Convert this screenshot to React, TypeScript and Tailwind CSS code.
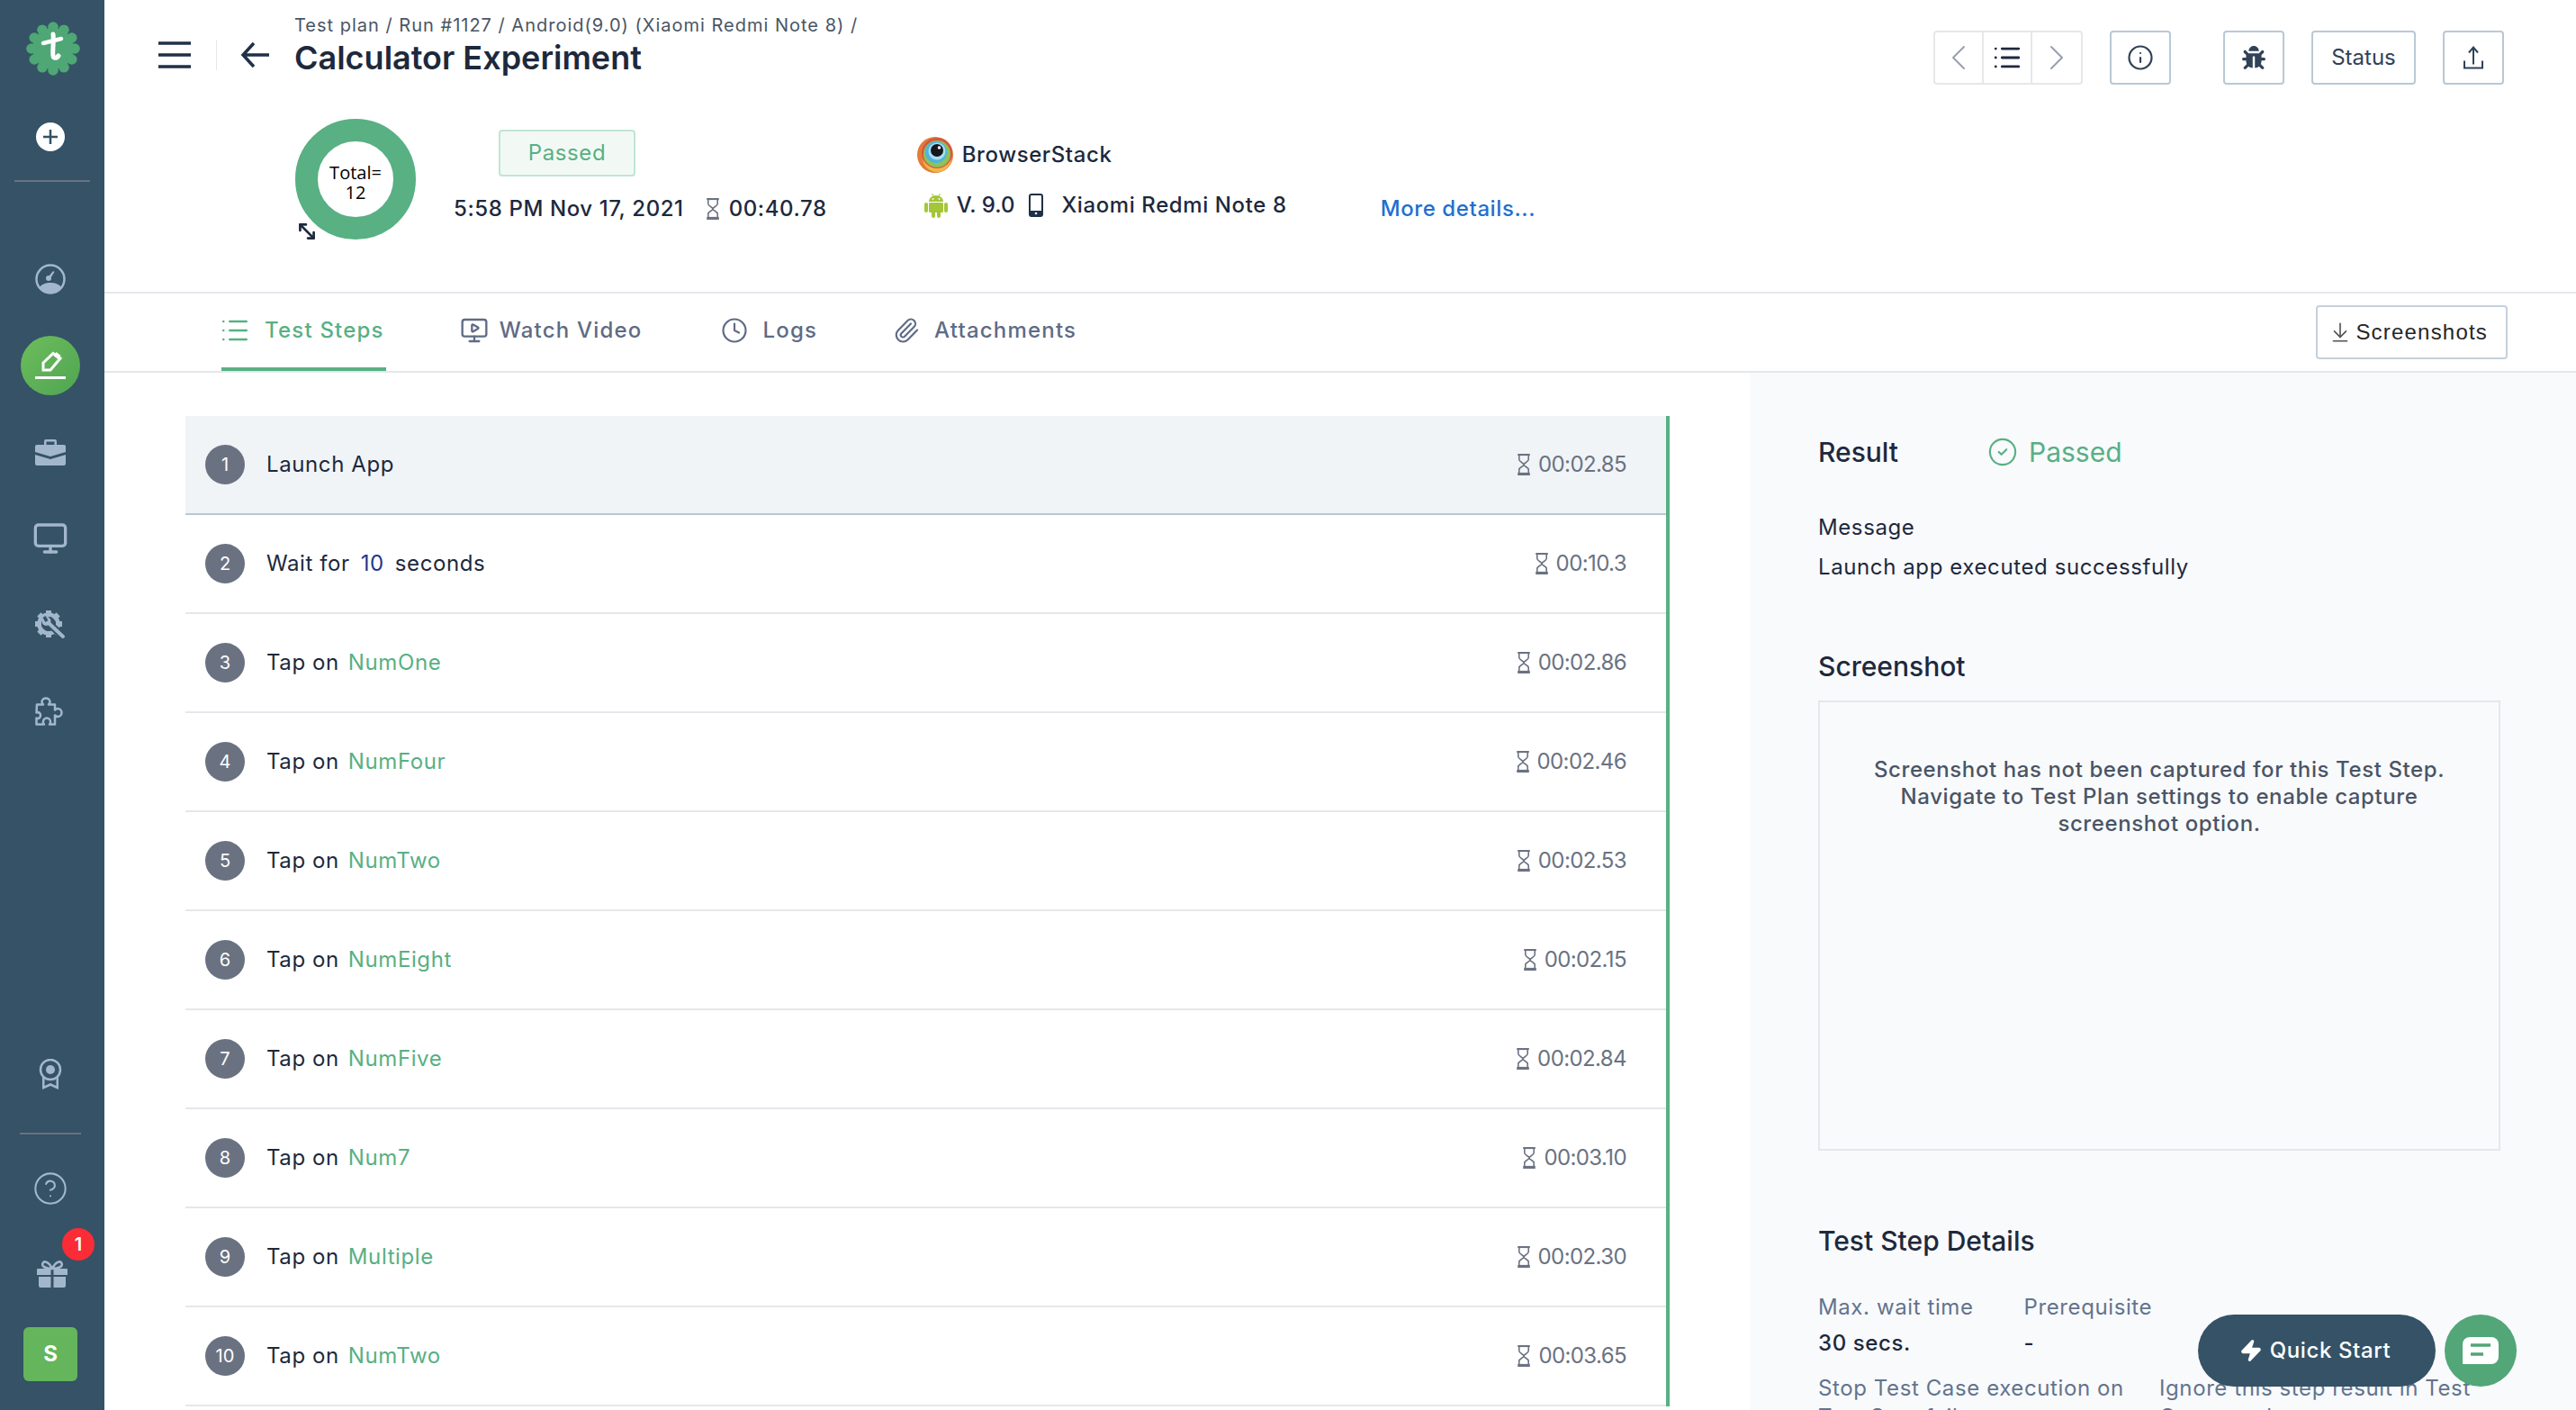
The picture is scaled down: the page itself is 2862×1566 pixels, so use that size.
import {
  ArrowDownToLine,
  ChevronLeft,
  ChevronRight,
  CircleCheck,
  CircleHelp,
  Clock,
  Info,
  List,
  Monitor,
  MonitorPlay,
  MoveDiagonal2,
  Paperclip,
  Zap,
} from "lucide-react";
import { FaBug } from "react-icons/fa";

const steps = [
  { n: 1, verb: "Launch App", time: "00:02.85" },
  { n: 2, verb: "Wait for", value: "10", after: "seconds", time: "00:10.3" },
  { n: 3, verb: "Tap on", target: "NumOne", time: "00:02.86" },
  { n: 4, verb: "Tap on", target: "NumFour", time: "00:02.46" },
  { n: 5, verb: "Tap on", target: "NumTwo", time: "00:02.53" },
  { n: 6, verb: "Tap on", target: "NumEight", time: "00:02.15" },
  { n: 7, verb: "Tap on", target: "NumFive", time: "00:02.84" },
  { n: 8, verb: "Tap on", target: "Num7", time: "00:03.10" },
  { n: 9, verb: "Tap on", target: "Multiple", time: "00:02.30" },
  { n: 10, verb: "Tap on", target: "NumTwo", time: "00:03.65" },
];

function Logo() {
  const lobes = Array.from({ length: 12 }, (_, i) => (i * Math.PI) / 6);
  return (
    <svg viewBox="0 0 60 60" className="ml-1.5 size-15">
      <circle cx="30" cy="30" r="23" fill="#4ea774" />
      {lobes.map((a) => (
        <circle key={a} cx={30 + 24 * Math.cos(a)} cy={30 + 24 * Math.sin(a)} r="5.8" fill="#4ea774" />
      ))}
      <path d="M30 14c1 8-1 20 0 24 .5 3 4 3 6 0" fill="none" stroke="#fff" strokeWidth="5" strokeLinecap="round" />
      <path d="M19 24l20-5" fill="none" stroke="#fff" strokeWidth="4.5" strokeLinecap="round" />
    </svg>
  );
}

function Gauge() {
  return (
    <svg viewBox="0 0 34 34" className="size-8.5" fill="#a3b7cc">
      <circle cx="17" cy="17" r="15.5" fill="none" stroke="#a3b7cc" strokeWidth="2.5" />
      <path d="M4.5 26c4-4 8-5 12.500-5s8.500 1 12.500 5c-3 4-7.500 6.500-12.500 6.500S7.500 30 4.500 26z" />
      <circle cx="15" cy="16" r="3" />
      <path d="M15 14l5-6 1.500 1-4 6.500z" />
    </svg>
  );
}

function PencilLine() {
  return (
    <svg viewBox="0 0 34 32" className="w-8.5 h-8" fill="none" stroke="#fff">
      <path d="M9 13L20 2.500l8 5.500L17 21H9z" strokeWidth="3" />
      <path d="M22 3l5 4" strokeWidth="5" />
      <path d="M0 29.500h34" strokeWidth="3" />
    </svg>
  );
}

function Briefcase() {
  return (
    <svg viewBox="0 0 34 30" className="w-8.5 h-7.5" fill="#a3b7cc">
      <path d="M10 7V3a2 2 0 012-2h10a2 2 0 012 2v4h-2.500V3.500h-9V7z" />
      <path d="M0 9a2 2 0 012-2h30a2 2 0 012 2v6l-17 5-17-5z" />
      <path d="M0 18l17 5 17-5v10a2 2 0 01-2 2H2a2 2 0 01-2-2z" />
    </svg>
  );
}

function GearWrench() {
  const teeth = Array.from({ length: 8 }, (_, i) => i * 45);
  return (
    <svg viewBox="0 0 34 32" className="w-8.5 h-8">
      <g transform="translate(15 15)">
        {teeth.map((a) => (
          <rect key={a} x="-3" y="-15" width="6" height="7" fill="#a3b7cc" transform={`rotate(${a})`} />
        ))}
        <circle r="10.500" fill="none" stroke="#a3b7cc" strokeWidth="4.500" />
      </g>
      <path d="M12 11l19 18" stroke="#355266" strokeWidth="8" />
      <path d="M14 13l17 16" stroke="#a3b7cc" strokeWidth="4" strokeLinecap="round" />
      <circle cx="12.500" cy="12" r="5" fill="#a3b7cc" />
      <path d="M10 7l3 5" stroke="#355266" strokeWidth="3.500" />
    </svg>
  );
}

function PuzzlePiece() {
  return (
    <svg viewBox="0 0 33 32" className="h-8 w-8.5" fill="none" stroke="#a3b7cc" strokeWidth="2.500" strokeLinejoin="round">
      <path d="M1.500 8.500h7c-1-1-1.500-2-1.500-3a4.500 4 0 019 0c0 1-.5 2-1.500 3h7v6c1-1 2-1.500 3-1.500a4.500 4.500 0 010 9c-1 0-2-.5-3-1.500v10h-6c1-1 1.500-2 1-3a4 4 0 00-8 0c-.5 1 0 2 1 3h-8.500v-7c1 .5 2.500.5 3.500-.5a3.500 3.500 0 000-5c-1-1-2.500-1-3.500-.5z" />
    </svg>
  );
}

function Ribbon() {
  return (
    <svg viewBox="0 0 26 34" className="w-6.5 h-8.5" fill="#a3b7cc">
      <path d="M4 20v14l9-4 9 4V20h-2.500v10L13 27l-6.500 3V20z" />
      <circle cx="13" cy="12" r="11" fill="#355266" stroke="#a3b7cc" strokeWidth="2.500" />
      <circle cx="13" cy="12" r="5" />
    </svg>
  );
}

function Gift() {
  return (
    <svg viewBox="0 0 34 30" className="w-8.5 h-7.5" fill="#a3b7cc">
      <path d="M17 9C13 1 8 0 6.500 3 5 6 9 9 17 9zm0 0c4-8 9-9 10.500-6C29 6 25 9 17 9z" fill="none" stroke="#a3b7cc" strokeWidth="2.500" />
      <path d="M1 9h14.500v7H0v-6a1 1 0 011-1zm17.500 0H33a1 1 0 011 1v6H18.500z" />
      <path d="M2 18h13.500v12H4a2 2 0 01-2-2zm16.500 0H32v10a2 2 0 01-2 2H18.500z" />
    </svg>
  );
}

function Hourglass({ className }: { className: string }) {
  return (
    <svg viewBox="0 0 15 23" className={className} fill="none" stroke="currentColor" strokeWidth="1.500">
      <path d="M1 1h13" strokeWidth="2" />
      <path d="M1 21.500h13" strokeWidth="3" />
      <path d="M2.500 1v5c0 3 5 3.500 5 5.500s-5 2.500-5 5.500v4M12.500 1v5c0 3-5 3.500-5 5.500s5 2.500 5 5.500v4" />
    </svg>
  );
}

function BrowserStackLogo() {
  return (
    <svg viewBox="0 0 40 40" className="size-10 shrink-0">
      <circle cx="20" cy="20" r="20" fill="#e27c37" />
      <circle cx="22" cy="23" r="16" fill="#f2b84b" />
      <circle cx="22" cy="18" r="17" fill="#d9553f" />
      <circle cx="22" cy="19" r="15" fill="#8fc258" />
      <circle cx="21" cy="17" r="12" fill="#4eb5dc" />
      <circle cx="22" cy="16" r="9.500" fill="#a8dff2" />
      <circle cx="22" cy="15" r="7" fill="#14171c" />
      <circle cx="24.500" cy="12" r="1.800" fill="#fff" />
    </svg>
  );
}

function AndroidIcon() {
  return (
    <svg viewBox="0 0 26 28" className="mr-2.5 h-7 w-6.5" fill="#a4c639">
      <path d="M8.500 1l2 3.500M17.500 1l-2 3.500" stroke="#a4c639" strokeWidth="1" />
      <path d="M5 10c0-4 3.500-7 8-7s8 3 8 7z" />
      <rect x="5" y="11" width="16" height="11" rx="1.500" />
      <rect x="0" y="11" width="4" height="11" rx="2" />
      <rect x="22" y="11" width="4" height="11" rx="2" />
      <rect x="8" y="20" width="4" height="8" rx="2" />
      <rect x="14" y="20" width="4" height="8" rx="2" />
      <circle cx="9.500" cy="7" r="0.900" fill="#fff" />
      <circle cx="16.500" cy="7" r="0.900" fill="#fff" />
    </svg>
  );
}

function Phone() {
  return (
    <svg viewBox="0 0 16 26" className="w-4 h-6.5" fill="none">
      <rect x="1" y="1" width="14" height="24" rx="2" stroke="#1e3148" strokeWidth="2" />
      <path d="M1 19h14v4a2 2 0 01-2 2H3a2 2 0 01-2-2z" fill="#1e3148" />
      <circle cx="8" cy="22" r="1.300" fill="#fff" />
    </svg>
  );
}

function HeaderButton({ children, wide }: { children: React.ReactNode; wide?: boolean }) {
  return (
    <button className={`flex h-15 items-center justify-center rounded border-2 border-[#b9c8d6] text-slate-700 ${wide ? "w-29" : "w-17"}`}>
      {children}
    </button>
  );
}

function Tab({ icon, label, active, className = "gap-4" }: { icon: React.ReactNode; label: string; active?: boolean; className?: string }) {
  return (
    <div className={`flex items-center border-b-4 px-0.5 text-2xl font-medium tracking-wider ${className} ${active ? "border-[#58b083] text-[#58b083]" : "border-transparent text-[#5f6b85]"}`}>
      {icon}
      <span>{label}</span>
    </div>
  );
}

function StepRow({ step, selected }: { step: (typeof steps)[number]; selected: boolean }) {
  return (
    <div className={`flex items-center border-b-2 py-8 pr-11 pl-5.5 ${selected ? "border-[#b9c8d6] bg-[#f0f4f7]" : "border-gray-200"}`}>
      <span className="flex size-11 items-center justify-center rounded-full bg-gray-500 text-xl text-white">{step.n}</span>
      <div className="ml-6 flex gap-2.5 text-2xl tracking-wide text-slate-800">
        <span>{step.verb}</span>
        {step.value && <span className="px-0.5 text-blue-900">{step.value}</span>}
        {step.after && <span>{step.after}</span>}
        {step.target && <span className="text-[#58b083]">{step.target}</span>}
      </div>
      <div className="ml-auto flex items-center gap-2 text-2xl tracking-tight text-gray-500">
        <Hourglass className="h-6 w-4" />
        <span>{step.time}</span>
      </div>
    </div>
  );
}

export default function App() {
  return (
    <div className="relative flex h-screen w-full overflow-hidden bg-white font-[Inter,sans-serif] text-slate-800">
      {/* Sidebar */}
      <aside className="flex w-[116px] shrink-0 flex-col items-center bg-[#355266] pt-6 pr-1 pb-8 text-[#a3b7cc]">
        <Logo />
        <button className="mt-13 flex size-8 items-center justify-center rounded-full bg-white">
          <svg viewBox="0 0 18 18" className="size-4.5" stroke="#355266" strokeWidth="2.500">
            <path d="M9 1v16M1 9h16" />
          </svg>
        </button>
        <div className="mt-8 ml-1 h-0.5 w-21 bg-gray-500" />
        <nav className="mt-15 flex flex-col items-center">
          <div className="flex h-24 items-center"><Gauge /></div>
          <div className="flex h-24 items-center">
            <div className="flex size-16.5 items-center justify-center rounded-full bg-gradient-to-br from-[#6dbd5c] to-[#4fa552]"><PencilLine /></div>
          </div>
          <div className="flex h-24 items-center"><Briefcase /></div>
          <div className="flex h-24 items-center"><Monitor size={40} strokeWidth={2} /></div>
          <div className="flex h-24 items-center"><GearWrench /></div>
          <div className="flex h-24 items-center"><PuzzlePiece /></div>
        </nav>
        <div className="mt-auto flex flex-col items-center">
          <Ribbon />
          <div className="mt-12 h-0.5 w-17 bg-gray-500" />
          <CircleHelp className="mt-10" size={40} strokeWidth={1.25} />
          <div className="relative mt-15 ml-1">
            <Gift />
            <span className="absolute -top-9 left-7 flex size-9 items-center justify-center rounded-full bg-red-500 text-xl font-semibold text-white">1</span>
          </div>
          <div className="mt-11 flex size-15 items-center justify-center rounded-md bg-[#64b55b] text-2xl font-bold text-white">S</div>
        </div>
      </aside>

      <main className="flex min-w-0 flex-1 flex-col">
        {/* Header */}
        <header className="flex h-81.5 shrink-0 justify-between border-b-2 border-gray-200 pr-20 pl-15">
          <div className="pt-3.5">
            <div className="flex">
              <div className="mb-1.5 flex items-center self-end">
                <svg viewBox="0 0 36 30" className="h-7.5 w-9" stroke="#1e3148" strokeWidth="3.500">
                  <path d="M0 2h36M0 15h36M0 28h36" />
                </svg>
                <div className="mr-6.5 ml-7 h-8.5 w-px bg-gray-200" />
                <svg viewBox="0 0 32 30" className="mr-7 h-7.5 w-8" fill="none" stroke="#1e3148" strokeWidth="3.500">
                  <path d="M32 15H3M15 2L3 15l12 13" />
                </svg>
              </div>
              <div>
                <div className="text-xl tracking-wider text-gray-600">Test plan / Run #1127 / Android(9.0) (Xiaomi Redmi Note 8) /</div>
                <h1 className="mt-0.5 text-4xl font-semibold text-slate-800">Calculator Experiment</h1>
              </div>
            </div>
            <div className="mt-12 ml-38 flex">
              <div className="relative">
                <div className="flex size-[134px] items-center justify-center rounded-full border-[25px] border-[#58b083] text-center font-['Open_Sans',sans-serif] text-xl leading-5.5 text-black">
                  <span className="pt-2">Total=<br />12</span>
                </div>
                <MoveDiagonal2 className="absolute -bottom-1 left-0 text-slate-800" size={26} strokeWidth={2.5} />
              </div>
              <div className="ml-10.5 pt-3">
                <div className="ml-12.5 flex h-13 w-38 items-center justify-center rounded border-2 border-[#c1e6d3] bg-[#f2f9f5] text-2xl tracking-wide text-[#58b083]">Passed</div>
                <div className="mt-5 flex items-center text-2xl font-medium tracking-wide">
                  <span>5:58 PM Nov 17, 2021</span>
                  <Hourglass className="mr-2.5 ml-6 h-6 w-4 text-gray-500" />
                  <span>00:40.78</span>
                </div>
              </div>
              <div className="ml-25 pt-5">
                <div className="flex items-center gap-2.5">
                  <BrowserStackLogo />
                  <span className="text-2xl font-medium tracking-wide">BrowserStack</span>
                </div>
                <div className="mt-5 flex items-center pl-2 text-2xl font-medium">
                  <AndroidIcon />
                  <span className="mr-4">V. 9.0</span>
                  <Phone />
                  <span className="ml-5 tracking-wide">Xiaomi Redmi Note 8</span>
                </div>
              </div>
              <div className="ml-26 pt-21 text-2xl font-medium tracking-wide text-[#1f6fd0]">More details...</div>
            </div>
          </div>

          <div className="flex gap-7.5 pt-8.5">
            <div className="flex h-15 rounded border-2 border-gray-200">
              <div className="flex w-13.5 items-center justify-center border-r-2 border-gray-200 text-gray-400"><ChevronLeft size={48} strokeWidth={1} /></div>
              <div className="flex w-13.5 items-center justify-center border-r-2 border-gray-200 text-slate-800"><List size={34} strokeWidth={2} /></div>
              <div className="flex w-13.5 items-center justify-center text-gray-400"><ChevronRight size={48} strokeWidth={1} /></div>
            </div>
            <HeaderButton><Info size={30} strokeWidth={1.75} /></HeaderButton>
            <div className="ml-7">
              <HeaderButton><FaBug size={26} /></HeaderButton>
            </div>
            <HeaderButton wide><span className="text-2xl">Status</span></HeaderButton>
            <HeaderButton>
              <svg viewBox="0 0 22 27" className="h-7 w-5.5" fill="none" stroke="currentColor" strokeWidth="2">
                <path d="M11 2v19M6 8l5-6 5 6M1 17v8h20v-8" />
              </svg>
            </HeaderButton>
          </div>
        </header>

        {/* Tabs */}
        <div className="flex h-22 shrink-0 justify-between border-b-2 border-gray-200 pr-19 pl-[130px]">
          <div className="flex gap-20">
            <Tab active label="Test Steps" icon={<List className="-ml-1" size={34} strokeWidth={1.75} />} />
            <Tab className="mr-1 gap-3" label="Watch Video" icon={<MonitorPlay size={32} strokeWidth={1.75} />} />
            <Tab label="Logs" icon={<Clock size={30} strokeWidth={1.75} />} />
            <Tab label="Attachments" icon={<Paperclip size={30} strokeWidth={1.75} />} />
          </div>
          <div className="flex items-center">
            <button className="flex h-15 items-center gap-1 rounded border-2 border-[#c5d1dc] pr-5 pl-3 font-['Liberation_Sans',sans-serif] text-2xl tracking-wider text-neutral-800">
              <ArrowDownToLine className="text-neutral-600" size={26} strokeWidth={1.5} />
              Screenshots
            </button>
          </div>
        </div>

        {/* Body */}
        <div className="flex min-h-0 flex-1">
          <div className="flex-1 pt-12 pr-[89px] pl-[90px]">
            <div className="border-r-4 border-[#58b083]">
              {steps.map((step) => (
                <StepRow key={step.n} step={step} selected={step.n === 1} />
              ))}
            </div>
          </div>

          <section className="w-[918px] shrink-0 bg-[#f9fafc] pt-17.5 pr-21 pl-19">
            <div className="flex items-center">
              <h2 className="w-[188px] text-3xl font-medium">Result</h2>
              <CircleCheck className="mr-3 text-[#58b083]" size={34} strokeWidth={1.5} />
              <span className="text-3xl text-[#58b083]">Passed</span>
            </div>
            <div className="mt-12.5 text-2xl tracking-wide">Message</div>
            <div className="mt-3 text-2xl tracking-wide">Launch app executed successfully</div>
            <h2 className="mt-19 text-3xl font-medium">Screenshot</h2>
            <div className="mt-5 h-125 border-2 border-gray-200 px-14 pt-15 text-center text-2xl leading-7.5 font-medium tracking-wide text-gray-600">
              Screenshot has not been captured for this Test Step. Navigate to Test Plan settings to enable capture screenshot option.
            </div>
            <h2 className="mt-20.5 text-3xl font-medium">Test Step Details</h2>
            <div className="mt-10 flex gap-14 text-2xl tracking-wide">
              <div>
                <div className="text-slate-500">Max. wait time</div>
                <div className="mt-2 font-medium">30 secs.</div>
              </div>
              <div>
                <div className="text-slate-500">Prerequisite</div>
                <div className="mt-2 font-medium">-</div>
              </div>
            </div>
            <div className="mt-4.5 grid grid-cols-2 text-2xl tracking-wide text-slate-500">
              <div>Stop Test Case execution on Test Step failure</div>
              <div>Ignore this step result in Test Case result</div>
            </div>
          </section>
        </div>
      </main>

      {/* Floating actions */}
      <div className="absolute right-16.5 bottom-6.5 flex items-center gap-2.5">
        <button className="flex h-20 w-66 items-center justify-center gap-2 rounded-full bg-[#355266] pr-1 text-2xl font-medium tracking-wide text-white">
          <Zap size={26} fill="#fff" />
          Quick Start
        </button>
        <button className="flex size-20 items-center justify-center rounded-full bg-[#52a677]">
          <svg viewBox="0 0 40 30" className="h-7.5 w-10">
            <path d="M0 8a8 8 0 018-8h24a8 8 0 018 8v14a8 8 0 01-8 8H0z" fill="#fff" />
            <path d="M9 9h22M9 19h14" stroke="#52a677" strokeWidth="3.500" />
          </svg>
        </button>
      </div>
    </div>
  );
}
